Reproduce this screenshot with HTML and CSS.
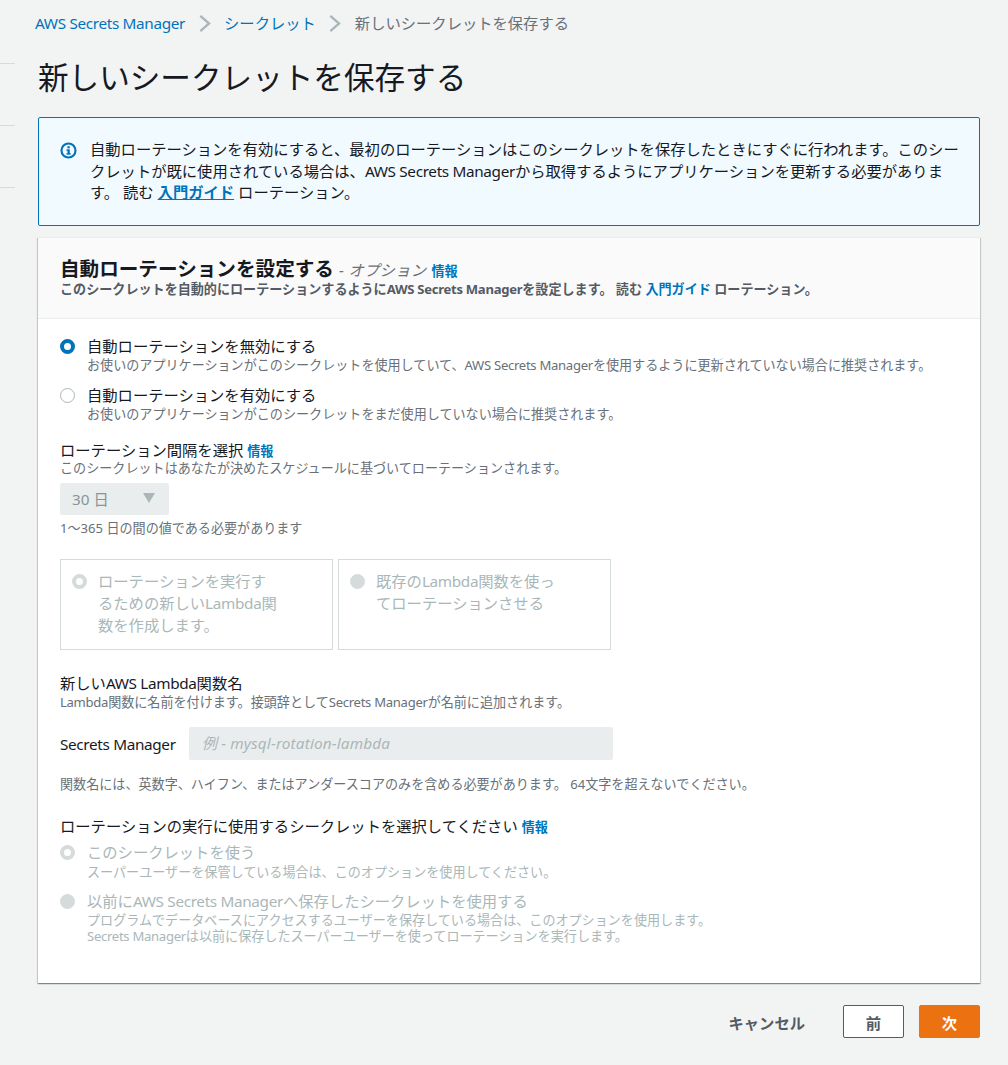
FILE: index.html
```html
<!DOCTYPE html>
<html lang="ja">
<head>
<meta charset="utf-8">
<title>新しいシークレットを保存する</title>
<link rel="stylesheet" href="styles.css">
</head>
<body>
<div class="rail"><i></i><i></i><i></i></div>
<main class="page">
  <nav class="crumbs">
    <a href="#" class="la">AWS Secrets Manager</a>
    <svg class="chev" viewBox="0 0 12 16"><path d="M2 1.5 9.5 8 2 14.5" fill="none" stroke="#aab7b8" stroke-width="2"/></svg>
    <a href="#">シークレット</a>
    <svg class="chev" viewBox="0 0 12 16"><path d="M2 1.5 9.5 8 2 14.5" fill="none" stroke="#aab7b8" stroke-width="2"/></svg>
    <span>新しいシークレットを保存する</span>
  </nav>
  <h1>新しいシークレットを保存する</h1>
  <div class="alert">
    <svg class="alert-icon" viewBox="0 0 16 16"><circle cx="8" cy="8" r="6.6" fill="none" stroke="#0073bb" stroke-width="2"/><rect x="7" y="7" width="2.2" height="4.6" fill="#0073bb"/><rect x="7" y="4" width="2.2" height="2" fill="#0073bb"/><rect x="6" y="7" width="2" height="1.2" fill="#0073bb"/><rect x="6" y="10.6" width="4.2" height="1.2" fill="#0073bb"/></svg>
    <p>自動ローテーションを有効にすると、最初のローテーションはこのシークレットを保存したときにすぐに行われます。このシークレットが既に使用されている場合は、<span class="la">AWS Secrets Manager</span>から取得するようにアプリケーションを更新する必要があります。 読む <a href="#">入門ガイド</a> ローテーション。</p>
  </div>
  <section class="card">
    <header class="card-head">
      <h2>自動ローテーションを設定する <em>- オプション</em> <a href="#">情報</a></h2>
      <p>このシークレットを自動的にローテーションするように<span class="la">AWS Secrets Manager</span>を設定します。 読む <a href="#">入門ガイド</a> ローテーション。</p>
    </header>
    <div class="card-body">
      <div class="radio-row first">
        <span class="radio on"></span>
        <div><div class="r-title">自動ローテーションを無効にする</div><div class="r-desc">お使いのアプリケーションがこのシークレットを使用していて、<span class="la">AWS Secrets Manager</span>を使用するように更新されていない場合に推奨されます。</div></div>
      </div>
      <div class="radio-row second">
        <span class="radio"></span>
        <div><div class="r-title">自動ローテーションを有効にする</div><div class="r-desc">お使いのアプリケーションがこのシークレットをまだ使用していない場合に推奨されます。</div></div>
      </div>
      <div class="label interval">ローテーション間隔を選択 <a href="#">情報</a></div>
      <div class="hint tight">このシークレットはあなたが決めたスケジュールに基づいてローテーションされます。</div>
      <div class="select"><span>30 日</span><svg viewBox="0 0 12 10"><path d="M0 0h12L6 10z" fill="#aab7b8"/></svg></div>
      <div class="hint after-select">1〜365 日の間の値である必要があります</div>
      <div class="tiles">
        <div class="tile"><span class="radio dis-on"></span><p>ローテーションを実行するための新しい<span class="la">Lambda</span>関数を作成します。</p></div>
        <div class="tile"><span class="radio dis"></span><p>既存の<span class="la">Lambda</span>関数を使ってローテーションさせる</p></div>
      </div>
      <div class="label lambda">新しい<span class="la">AWS Lambda</span>関数名</div>
      <div class="hint gap1"><span class="la">Lambda</span>関数に名前を付けます。接頭辞として<span class="la">Secrets Manager</span>が名前に追加されます。</div>
      <div class="name-row"><span class="la">Secrets Manager</span><div class="input">例 - mysql-rotation-lambda</div></div>
      <div class="hint after-input">関数名には、英数字、ハイフン、またはアンダースコアのみを含める必要があります。 64文字を超えないでください。</div>
      <div class="label use">ローテーションの実行に使用するシークレットを選択してください <a href="#">情報</a></div>
      <div class="radio-row d1">
        <span class="radio dis-on"></span>
        <div><div class="r-title muted">このシークレットを使う</div><div class="r-desc muted">スーパーユーザーを保管している場合は、このオプションを使用してください。</div></div>
      </div>
      <div class="radio-row d2">
        <span class="radio dis"></span>
        <div><div class="r-title muted">以前に<span class="la">AWS Secrets Manager</span>へ保存したシークレットを使用する</div><div class="r-desc muted">プログラムでデータベースにアクセスするユーザーを保存している場合は、このオプションを使用します。<br><span class="la">Secrets Manager</span>は以前に保存したスーパーユーザーを使ってローテーションを実行します。</div></div>
      </div>
    </div>
  </section>
  <footer class="actions">
    <button class="btn-link">キャンセル</button>
    <button class="btn-sec">前</button>
    <button class="btn-pri">次</button>
  </footer>
</main>
</body>
</html>
```
FILE: styles.css
```css
* { box-sizing: border-box; }
html, body { margin: 0; padding: 0; }
body {
  width: 1008px;
  height: 1065px;
  overflow: hidden;
  background: #f2f3f3;
  color: #16191f;
  font-family: "Noto Sans", "Noto Sans CJK JP", sans-serif;
  font-size: 15.3px;
  line-height: 22px;
  position: relative;
}
a { color: #0073bb; text-decoration: none; }
.la { letter-spacing: -0.022em; }
.rail { position: absolute; left: 0; top: 63px; width: 15px; }
.rail i { display: block; height: 1px; background: #d5dbdb; margin-bottom: 61px; }
.page { padding: 0 28px 0 38px; }
.crumbs { display: flex; align-items: center; height: 46px; color: #687078; margin-left: -3px; }
.chev { width: 14px; height: 19px; margin: 0 12.5px; }
h1 { margin: 9px 0 0; font-size: 30.6px; line-height: 44px; font-weight: 400; height: 62px; }
.alert {
  height: 109px;
  background: #f1faff;
  border: 1px solid #0073bb;
  border-radius: 2px;
  padding: 21px 20px 0 21px;
  display: flex;
  gap: 13px;
}
.alert-icon { width: 17px; height: 17px; margin-top: 3px; flex: none; }
.alert p { margin: 0; line-height: 21.5px; }
.alert a { font-weight: 700; text-decoration: underline; }
.card {
  margin-top: 11px;
  height: 746px;
  background: #fff;
  border-top: 1px solid #eaeded;
  box-shadow: 0 1px 1px 0 rgba(0,28,36,.3), 1px 1px 1px 0 rgba(0,28,36,.15), -1px 1px 1px 0 rgba(0,28,36,.15);
}
.card-head { height: 81px; background: #fafafa; border-bottom: 1px solid #eaeded; padding: 18px 22px 0; }
.card-head h2 { margin: 0; font-size: 19.6px; line-height: 26px; font-weight: 700; }
.card-head h2 em { font-size: 15.3px; font-weight: 400; color: #687078; letter-spacing: 0.3px; }
.card-head h2 a { font-size: 13.08px; }
.card-head p { margin: -3px 0 0; font-size: 13.08px; line-height: 16px; font-weight: 700; color: #545b64; }
.card-body { padding: 0 22px; }
.radio-row { display: flex; gap: 12px; }
.radio-row.first { padding-top: 16px; }
.radio-row.second { margin-top: 11px; }
.radio { flex: none; width: 15px; height: 15px; border-radius: 50%; border: 1px solid #aab7b8; background: #fff; margin-top: 4px; }
.radio.on { border: 4px solid #0073bb; }
.radio.dis { background: #d5dbdb; border-color: #d5dbdb; }
.radio.dis-on { border: 4px solid #d5dbdb; background: #fff; }
.r-title { line-height: 22px; }
.r-desc { font-size: 13.08px; line-height: 16px; color: #687078; }
.r-desc.muted, .r-title.muted { color: #aab7b8; }
.label { line-height: 20px; }
.label a { font-size: 13.08px; font-weight: 700; }
.hint { font-size: 13.08px; line-height: 16px; color: #687078; }
.hint.gap1 { margin-top: 1px; }
.hint.tight { margin-top: -1px; }
.label.interval { margin-top: 18px; }
.select {
  margin-top: 7px;
  width: 109px;
  height: 32px;
  background: #eaeded;
  border-radius: 2px;
  color: #879596;
  display: flex;
  align-items: center;
  justify-content: space-between;
  padding: 0 14px 0 12px;
}
.select svg { width: 12px; height: 10px; margin-bottom: 3px; }
.hint.after-select { margin-top: 5px; }
.tiles { display: flex; gap: 5px; margin-top: 23px; }
.tile { width: 273px; height: 91px; border: 1px solid #d5dbdb; display: flex; gap: 11px; padding: 10px 12px 0 11px; }
.tile .radio { margin-top: 4px; }
.tile p { margin: 0; width: 180px; color: #aab7b8; line-height: 22px; }
.label.lambda { margin-top: 23px; }
.name-row { display: flex; align-items: center; margin-top: 17px; gap: 13px; }
.input {
  width: 424px;
  height: 33px;
  background: #eaeded;
  border-radius: 2px;
  padding-left: 13px;
  line-height: 33px;
  font-style: italic;
  letter-spacing: 0.15px;
  color: #aab7b8;
}
.hint.after-input { margin-top: 16px; }
.label.use { margin-top: 24px; }
.radio-row.d1 { margin-top: 4px; }
.radio-row.d1 .r-desc { margin-top: 1px; }
.radio-row.d2 { margin-top: 10px; }
.actions { display: flex; justify-content: flex-end; align-items: center; margin-top: 22px; }
button { font-family: inherit; font-size: 15.3px; font-weight: 700; height: 33px; border-radius: 2px; cursor: pointer; padding: 0; }
.btn-link { background: none; border: 0; color: #545b64; margin-right: 38px; }
.btn-sec { width: 61px; background: #fff; border: 1px solid #545b64; color: #545b64; margin-right: 15px; }
.btn-pri { width: 61px; background: #ec7211; border: 1px solid #ec7211; color: #fff; }
```
